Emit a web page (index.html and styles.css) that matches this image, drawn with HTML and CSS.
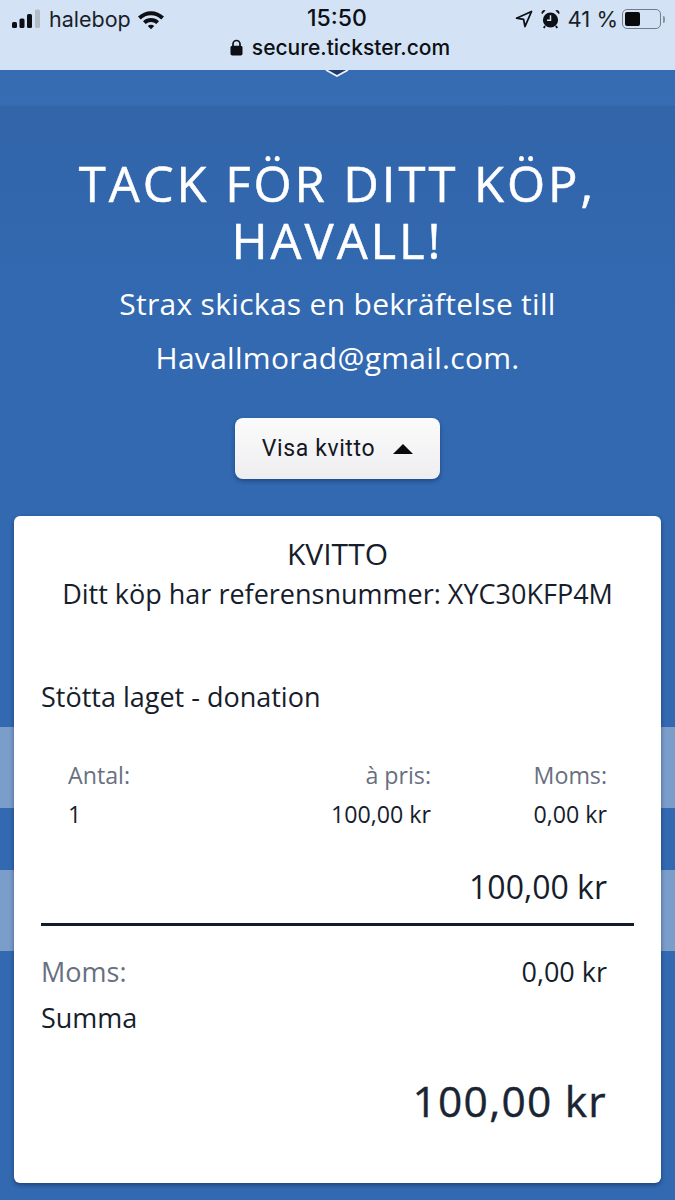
FILE: index.html
```html
<!DOCTYPE html>
<html lang="sv">
<head>
<meta charset="utf-8">
<title>Tack för ditt köp</title>
<link rel="stylesheet" href="styles.css">
</head>
<body>
<header class="chrome">
  <div class="status">
    <div class="status-left">
      <svg class="signal" width="30" height="20" viewBox="0 0 30 20"><rect x="0" y="13" width="5" height="6" rx="1.5" fill="#0d0f14"/><rect x="7.5" y="9.5" width="5" height="9.5" rx="1.5" fill="#0d0f14"/><rect x="15" y="5" width="5" height="14" rx="1.5" fill="#0d0f14"/><rect x="23" y="0.5" width="5" height="18.5" rx="1.5" fill="#b4bcc6"/></svg>
      <span class="carrier">halebop</span>
      <svg class="wifi" width="28" height="21" viewBox="0 0 28 21"><path d="M1 7.6A18.5 18.5 0 0 1 27 7.6L24.3 10.4A14.6 14.6 0 0 0 3.7 10.4Z" fill="#0d0f14"/><path d="M6 12.3A11.5 11.5 0 0 1 22 12.3L19.3 15A7.7 7.7 0 0 0 8.7 15Z" fill="#0d0f14"/><path d="M10.8 17A4.6 4.6 0 0 1 17.2 17L14 20.3Z" fill="#0d0f14"/></svg>
    </div>
    <div class="time">15:50</div>
    <div class="status-right">
      <svg width="18" height="18" viewBox="0 0 18 18"><path d="M16.5 1.5 1.5 8.2 8.6 9.4 10 16.5Z" fill="none" stroke="#0d0f14" stroke-width="1.8" stroke-linejoin="round"/></svg>
      <svg class="alarm" width="19" height="20" viewBox="0 0 19 20"><circle cx="9.5" cy="11" r="7.6" fill="#0d0f14"/><path d="M1 5.2 4.6 1.6A2.6 2.6 0 0 0 1 5.2ZM18 5.2 14.4 1.6A2.6 2.6 0 0 1 18 5.2Z" fill="#0d0f14"/><path d="M9.5 6.3V11.3H6" fill="none" stroke="#d3e3f5" stroke-width="1.5"/><path d="M4 17 2.8 19M15 17 16.2 19" stroke="#0d0f14" stroke-width="1.8"/></svg>
      <span class="battery-text">41 %</span>
      <div class="battery"><div class="battery-fill"></div></div>
      <div class="battery-cap"></div>
    </div>
  </div>
  <div class="url">
    <svg width="13" height="17" viewBox="0 0 13 17"><path d="M3 7.5V5a3.5 3.5 0 0 1 7 0v2.5" fill="none" stroke="#0d0f14" stroke-width="1.7"/><rect x="0.5" y="6.8" width="12" height="9.7" rx="1.8" fill="#0d0f14"/></svg>
    <span>secure.tickster.com</span>
  </div>
</header>
<main class="page">
  <svg class="chevron" width="24" height="8" viewBox="0 0 24 8"><path d="M1 0 12 6 23 0Z" fill="#1f3a6e"/><path d="M1 0 12 6 23 0" fill="none" stroke="#eef3fa" stroke-width="1.8"/></svg>
  <section class="hero">
    <h1 class="title">TACK FÖR DITT KÖP,<br>HAVALL!</h1>
    <p class="lead">Strax skickas en bekräftelse till<br>Havallmorad@gmail.com.</p>
    <button class="toggle" type="button">Visa kvitto<span class="arrow"></span></button>
  </section>
  <section class="card">
    <div class="card-head">
      <div class="card-title">KVITTO</div>
      <div class="reference">Ditt köp har referensnummer: XYC30KFP4M</div>
    </div>
    <div class="item-name">Stötta laget - donation</div>
    <div class="item-grid">
      <span class="muted">Antal:</span><span class="muted right">à pris:</span><span class="muted right">Moms:</span>
      <span>1</span><span class="right">100,00 kr</span><span class="right">0,00 kr</span>
    </div>
    <div class="item-total">100,00 kr</div>
    <div class="rule"></div>
    <div class="vat-row"><span class="muted">Moms:</span><span>0,00 kr</span></div>
    <div class="sum-label">Summa</div>
    <div class="grand-total">100,00 kr</div>
  </section>
</main>
</body>
</html>
```

FILE: styles.css
```css
* { box-sizing: border-box; }
html, body { margin: 0; height: 1200px; overflow: hidden; }
body { font-family: "Open Sans", sans-serif; color: #161d2b; background: #3269b0; }

.chrome { height: 70px; background: #d3e3f5; color: #0d0f14; padding: 7px 10px 0 12px; }
.status { display: flex; justify-content: space-between; align-items: center; height: 24px; position: relative; font-family: Inter, sans-serif; }
.status-left { display: flex; align-items: center; }
.signal { margin-right: 7px; }
.carrier { font-size: 21.5px; color: #1a1f29; margin-right: 6px; }
.time { position: absolute; left: 295px; top: 0; font-size: 23px; font-weight: 500; line-height: 22px; }
.status-right { display: flex; align-items: center; }
.alarm { margin-left: 8px; }
.battery-text { font-size: 22px; margin-left: 7px; color: #1a1f29; }
.battery { width: 39px; height: 20px; margin-left: 4px; border: 1.5px solid #737c88; border-radius: 5px; padding: 2px; }
.battery-fill { width: 15px; height: 100%; background: #0a0a0c; border-radius: 2px; }
.battery-cap { width: 2px; height: 7px; margin-left: 2px; background: #8a929c; border-radius: 0 2px 2px 0; }
.url { display: flex; justify-content: center; align-items: center; gap: 9px; height: 26px; margin-top: 3px; padding-left: 3px; font-family: Inter, sans-serif; font-size: 21px; font-weight: 500; }

.page {
  position: relative;
  height: 1130px;
  padding-top: 1px;
  background:
    linear-gradient(#7b9dc9, #7b9dc9) 0 657px / 100% 81px no-repeat,
    linear-gradient(#7b9dc9, #7b9dc9) 0 800px / 100% 81px no-repeat,
    linear-gradient(#356cb1 0, #376eb3 35px, #3265aa 36px, #3269b0 240px);
}
.chevron { position: absolute; left: 325px; top: 0; }

.hero { display: flex; flex-direction: column; align-items: center; text-align: center; padding-top: 84px; }
.title { margin: 0; color: #fff; font-size: 49px; font-weight: 400; line-height: 57px; letter-spacing: 2.95px; -webkit-text-stroke: .5px #fff; }
.lead { margin: 8px 0 0; color: #fff; font-size: 30px; line-height: 54px; font-weight: 400; letter-spacing: .3px; }
.toggle {
  display: flex; align-items: center; justify-content: center;
  width: 205px; height: 61px; margin-top: 33px;
  border: 0; border-radius: 8px;
  background: linear-gradient(#fbfbfb, #eeeef1);
  box-shadow: 0 2px 4px rgba(10, 30, 70, .45);
  font-family: Roboto, sans-serif; font-size: 23px; letter-spacing: .6px; color: #14171f;
}
.arrow { width: 0; height: 0; margin-left: 18px; border-left: 10.5px solid transparent; border-right: 10.5px solid transparent; border-bottom: 10px solid #0a0a0c; }

.card {
  width: 647px; height: 667px; margin: 37px 0 0 14px; padding: 0 27px;
  background: #fff; border-radius: 6px;
  box-shadow: 0 2px 4px rgba(10, 30, 70, .5);
}
.card-head { padding-top: 20px; text-align: center; }
.card-title { font-size: 30px; line-height: 36px; }
.reference { font-size: 27px; line-height: 43px; }
.item-name { margin-top: 63px; font-size: 27px; line-height: 38px; }
.item-grid { display: grid; grid-template-columns: 1fr 1fr 176px; padding: 0 27px; margin-top: 39px; font-size: 23.2px; grid-auto-rows: 39.5px; align-items: center; }
.muted { color: #687080; }
.right { text-align: right; }
.item-total { margin-top: 31px; padding-right: 27px; text-align: right; font-size: 32px; line-height: 44px; }
.rule { height: 3px; margin-top: 14px; background: #131c2c; }
.vat-row { display: flex; justify-content: space-between; padding-right: 27px; margin-top: 28px; font-size: 27px; line-height: 36px; }
.sum-label { margin-top: 9px; font-size: 27px; line-height: 38px; }
.grand-total { margin-top: 36px; padding-right: 27px; text-align: right; font-size: 42.5px; line-height: 56px; letter-spacing: 1.25px; color: #1a2433; -webkit-text-stroke: .4px #1a2433; }
```
